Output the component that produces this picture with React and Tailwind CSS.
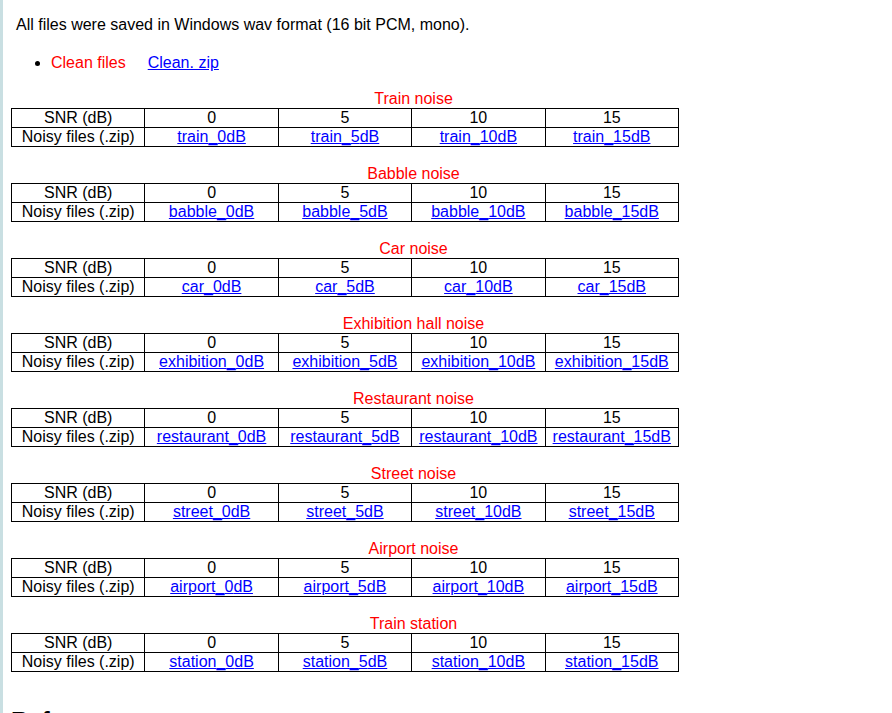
const noises = [
  { title: 'Train noise', key: 'train' },
  { title: 'Babble noise', key: 'babble' },
  { title: 'Car noise', key: 'car' },
  { title: 'Exhibition hall noise', key: 'exhibition' },
  { title: 'Restaurant noise', key: 'restaurant' },
  { title: 'Street noise', key: 'street' },
  { title: 'Airport noise', key: 'airport' },
  { title: 'Train station', key: 'station' },
]

const snrs = [0, 5, 10, 15]

function NoiseBlock({ title, name }) {
  return (
    <div className="mb-[17px]">
      <div className="w-[805px] text-center text-[#ff0000] leading-[19px] h-[19px]">{title}</div>
      <table className="w-[668px] table-fixed border-collapse text-center leading-[18px]">
        <tbody>
          <tr>
            <td className="border border-black p-0">SNR (dB)</td>
            {snrs.map(s => (
              <td key={s} className="border border-black p-0">{s}</td>
            ))}
          </tr>
          <tr>
            <td className="border border-black p-0 whitespace-nowrap">Noisy files (.zip)</td>
            {snrs.map(s => (
              <td key={s} className="border border-black p-0 whitespace-nowrap">
                <a href="#" className="text-[#0000ff] underline">{name}_{s}dB</a>
              </td>
            ))}
          </tr>
        </tbody>
      </table>
    </div>
  )
}

export default function App() {
  return (
    <div
      className="h-[713px] overflow-hidden bg-white border-l-[3px] border-[#c9dfe2] pl-[8px] text-[16px] text-black"
      style={{ fontFamily: '"Liberation Sans", Arial, sans-serif' }}
    >
      <p className="pt-[16px] pl-[5px] leading-[18px]">
        All files were saved in Windows wav format (16 bit PCM, mono).
      </p>
      <ul className="mt-[20px] mb-[17px] pl-[40px] list-disc leading-[18px]">
        <li>
          <span className="text-[#ff0000]">Clean files</span>
          <a href="#" className="ml-[22px] text-[#0000ff] underline">Clean. zip</a>
        </li>
      </ul>
      {noises.map(n => (
        <NoiseBlock key={n.key} title={n.title} name={n.key} />
      ))}
      <h2 className="mt-[17px] pt-[18px] text-[24px] font-bold leading-[28px]">References</h2>
    </div>
  )
}
